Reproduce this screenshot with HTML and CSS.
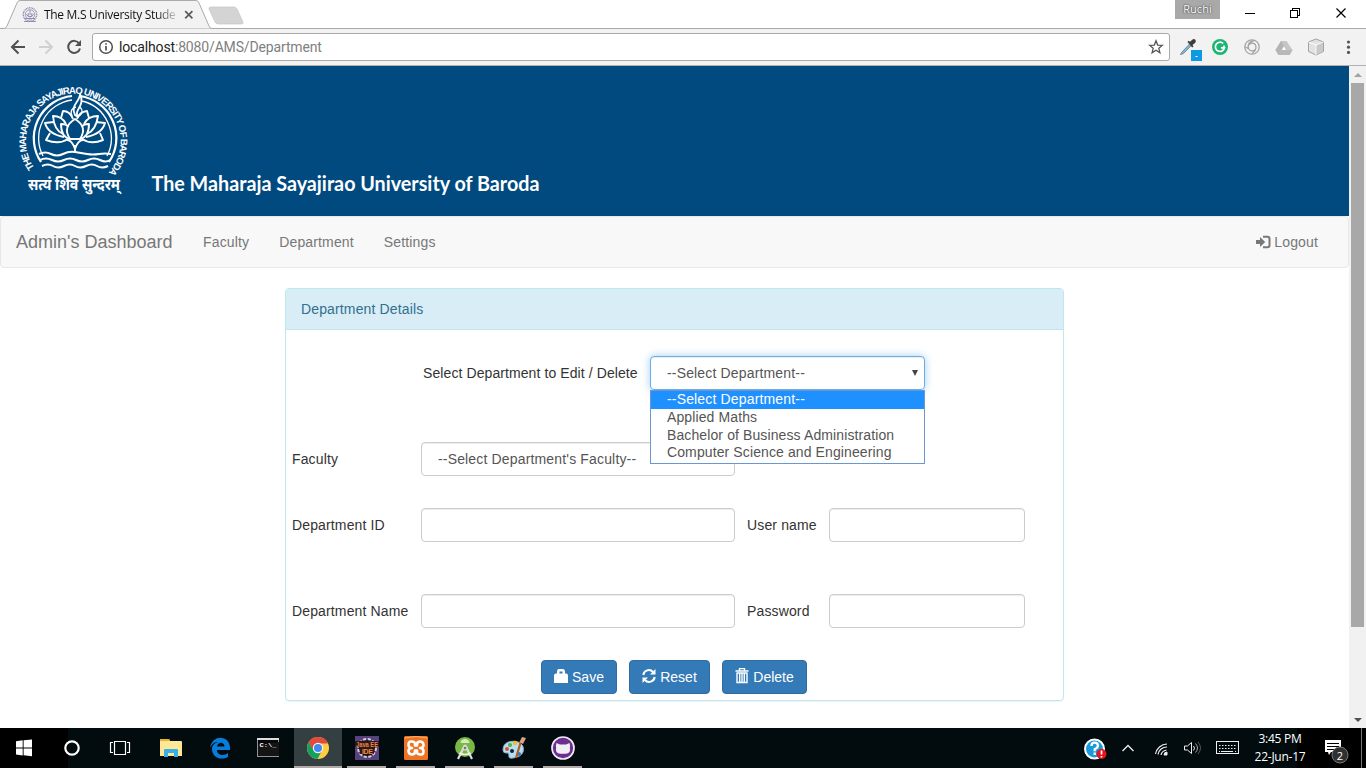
FILE: index.html
```html
<!DOCTYPE html>
<html lang="en">
<head>
<meta charset="utf-8">
<title>The M.S University Student</title>
<link rel="stylesheet" href="styles.css">
</head>
<body>
<div class="screen">
  <header class="tabstrip">
    <svg class="tab-shape" width="250" height="29" viewBox="0 0 250 29">
      <path d="M0 28.5H4Q6 28 7 26L17 3Q18 .5 20 .5H196Q198 .5 199 3L209 26Q210 28.5 212 28.5H250V29H0Z" fill="#f2f2f2" stroke="#aaa"/>
      <path d="M211 7H234Q236 7 237 9L243 22Q243.500 24 241 24H219Q216 24 215 22L209 9Q208.500 7 211 7Z" fill="#d4d4d4" stroke="#c4c4c4" stroke-width=".7"/>
    </svg>
    <div class="tab-content">
      <svg class="favicon" width="16" height="16" viewBox="0 0 16 16" fill="none" stroke="#8988ad">
        <circle cx="8" cy="7.500" r="6.700" stroke-dasharray="1 .6" stroke-width="1.400"/><circle cx="8" cy="7.500" r="4.700" stroke-width=".8"/><path d="M4.500 7q1 3 3.500 3t3.500-3M6 6q0 3 2 4 2-1 2-4M8 3v5M3 11.500h10M2 14.500h12" stroke-width=".9"/>
      </svg>
      <span class="tab-title">The M.S University Stude</span>
      <svg class="tab-close" width="10" height="10" viewBox="0 0 10 10"><path d="M1.200 1.200l7.200 7.200M8.400 1.200L1.200 8.400" stroke="#5a5a5a" stroke-width="1.700"/></svg>
    </div>
    <div class="window-controls">
      <span class="profile">Ruchi</span>
      <svg width="146" height="28" viewBox="0 0 146 28" fill="none" stroke="#000" shape-rendering="crispEdges">
        <path d="M25 13.500h10M70.500 10.500h7v7h-7zM72.500 10V8.500h7v7H78"/>
        <path d="M116.500 8.500l9 9M125.500 8.500l-9 9" shape-rendering="auto" stroke-width="1.200"/>
      </svg>
    </div>
  </header>

  <div class="toolbar">
    <svg class="nav-icons" width="92" height="36" viewBox="0 0 92 36" fill="none" stroke="#505050" stroke-width="2">
      <path d="M25 18H12.500M18.500 11.500L12 18l6.500 6.500"/>
      <path d="M39 18h12.500M45.500 11.500L52 18l-6.500 6.500" stroke="#d0d0d0"/>
      <path d="M79.200 14.500A6 6 0 1 0 80 19.500"/><path d="M81 11v6h-6z" fill="#505050" stroke="none"/>
    </svg>
    <div class="omnibox">
      <svg width="16" height="16" viewBox="0 0 16 16" fill="none" stroke="#505050" stroke-width="1.500"><circle cx="8" cy="8" r="6.300"/><path d="M8 7v4.500M8 4.200v1.600" stroke-width="1.700"/></svg>
      <span class="url">localhost<span class="path">:8080/AMS/Department</span></span>
      <svg width="16" height="16" viewBox="0 0 16 16" fill="none" stroke="#555" stroke-width="1.300"><path d="M8 1.800l1.700 4.300 4.600.3-3.500 2.900 1.100 4.500L8 11.300l-3.900 2.500 1.100-4.500-3.500-2.900 4.600-.3z"/></svg>
    </div>
    <svg class="extensions" width="196" height="36" viewBox="0 0 196 36">
      <g><path d="M11.500 23.500l8.500-9 1.700 1.700-8.500 8.500-2.700.8z" fill="#71bbe0" stroke="#777" stroke-width=".8"/><path d="M17.500 13l1-1.200 1.500 1 2.500-2.300q2-1 3 .5t-.5 3L22.500 16l1 1.500-1.300 1z" fill="#3d3d40"/><rect x="21" y="21" width="11" height="11" fill="#0c9ae2"/><path d="M25.500 27.500h2" stroke="#fff"/></g>
      <circle cx="50" cy="18" r="8" fill="#1cb574"/><path d="M53.200 14.500A4.600 4.600 0 1 0 54.500 18.800H51M54 16.500v3" fill="none" stroke="#fff" stroke-width="1.700"/>
      <g fill="none" stroke="#a5a5a5" stroke-width="1.300"><circle cx="82" cy="18" r="7.200"/><path d="M84.800 20.800A3.900 3.900 0 1 1 86 17.500q0 4.500-4 7M79 20q-1.500-1-4-2M78 18q0-5 6-6.500"/></g>
      <path d="M111 12h5.500l6 9-3 5h-11l-3-5z" fill="#c6c6c6"/><path d="M111 12l2.800 4.500-5.300 9.500-3-5z" fill="#b4b4b4"/><path d="M112 21l1.800-3.500 2.200 3.500z" fill="#fff"/><path d="M112 21h10.500l-3 5h-11z" fill="#b8b8b8"/>
      <path d="M146 10l7.500 3v9.500L146 26l-7.500-3.500V13z" fill="#e2e2e2" stroke="#a2a2a2"/><path d="M138.500 13l7.500 3 7.500-3M146 16v10" fill="none" stroke="#fff"/><path d="M146.500 16.500l6.500-3v9l-6.500 3z" fill="#c9c9c9"/>
      <g fill="#555"><circle cx="178.500" cy="13" r="1.600"/><circle cx="178.500" cy="18.200" r="1.600"/><circle cx="178.500" cy="23.400" r="1.600"/></g>
    </svg>
  </div>

  <div class="viewport">
    <main class="page">
      <div class="banner">
        <svg width="600" height="150" viewBox="0 0 600 150">
          <defs><path id="ring" d="M34.500 102A47.300 47.300 0 1 1 105 110"/></defs>
          <text class="ring-text"><textPath href="#ring" textLength="212" lengthAdjust="spacing">THE MAHARAJA SAYAJIRAO UNIVERSITY OF BARODA</textPath></text>
          <g fill="none" stroke="#fff" stroke-linejoin="round">
            <path d="M41 96A42.500 42.500 0 0 1 72 30M80 30A42.500 42.500 0 0 1 109 96" stroke-width="2.200"/>
            <path d="M43 90A38.500 38.500 0 0 1 72 34M82 35A38.500 38.500 0 0 1 107 90" stroke-width="1.300"/>
            <path d="M80 28C80 36 70 39 75 49L78 51C73 44 86 40 80 28Z" stroke-width="1.800"/>
            <path d="M72 50Q69 43 76 41M78 51Q85 46 80 41" stroke-width="1.400"/>
            <g stroke-width="1.900">
              <path d="M75 53Q62 61 70 73H80Q88 61 75 53Z"/>
              <path d="M70 73Q61 71 61 58Q67 58 68 61M80 73Q89 71 89 58Q83 58 82 61"/>
              <path d="M63 68Q54 64 53 50Q62 50 66 58M87 68Q96 64 98 50Q88 50 84 58"/>
              <path d="M61 52L63 45Q70 45 73 53M77 53Q79 46 87 45L89 52"/>
              <path d="M54 56L45 57Q48 68 64 71M96 56L105 57Q102 68 86 71"/>
              <path d="M50 67L46 74Q59 79 68 73M100 67L103 74Q91 79 82 73"/>
              <path d="M67 74Q72 74 75 83Q78 74 83 74M75 79V86"/>
            </g>
            <g stroke-width="2">
              <path d="M39 88q6-3 12 0t12 0 12-2 12 2 12 0 12 0"/>
              <path d="M40 94q6-3 12 0t12 0 12 0 12 0 12 0 10 0"/>
              <path d="M42 100q6-3 11 0t11 0 11 0 11 0 11 0 11 0"/>
            </g>
          </g>
          <text class="motto" x="28" y="124" textLength="92" lengthAdjust="spacingAndGlyphs">सत्यं शिवं सुन्दरम्</text>
          <text class="uni-name" x="151.500" y="125" textLength="388" lengthAdjust="spacingAndGlyphs">The Maharaja Sayajirao University of Baroda</text>
        </svg>
      </div>

      <nav class="navbar">
        <span class="brand">Admin's Dashboard</span>
        <span class="nav-link">Faculty</span>
        <span class="nav-link">Department</span>
        <span class="nav-link">Settings</span>
        <span class="logout"><svg width="15" height="14" viewBox="0 0 15 14"><path d="M0 5h4V2L9.200 7 4 12V9H0z" fill="#777"/><path d="M7 1.800h4.500q2 0 2 2v6.400q0 2-2 2H7" fill="none" stroke="#777" stroke-width="2"/></svg>Logout</span>
      </nav>

      <section class="panel">
        <h1 class="panel-heading">Department Details</h1>
        <form class="panel-body">
          <div class="picker">
            <label>Select Department to Edit / Delete</label>
            <div class="control select focused">--Select Department--<span class="arrow"></span>
              <ul class="options">
                <li class="selected">--Select Department--</li>
                <li>Applied Maths</li>
                <li>Bachelor of Business Administration</li>
                <li>Computer Science and Engineering</li>
              </ul>
            </div>
          </div>
          <div class="row faculty-row">
            <label>Faculty</label><div class="control select">--Select Department's Faculty--</div>
          </div>
          <div class="row id-row">
            <label>Department ID</label><div class="control"></div>
            <label class="second">User name</label><div class="control"></div>
          </div>
          <div class="row">
            <label>Department Name</label><div class="control"></div>
            <label class="second">Password</label><div class="control"></div>
          </div>
          <div class="buttons">
            <div class="btn save"><svg width="14" height="14" viewBox="0 0 14 14"><path d="M0 14V6.500Q0 4.500 2 4.500H3V3Q3 0 5 0h3.500Q11 0 11 3v1.500h1Q14 4.500 14 6.500V14zM5.500 4.500h3V2.500h-3z" fill="#fff"/></svg>Save</div>
            <div class="btn reset"><svg width="14" height="14" viewBox="0 0 14 14"><path d="M1.300 6A5.600 5.600 0 0 1 11 3M12.700 8A5.600 5.600 0 0 1 3 11" fill="none" stroke="#fff" stroke-width="2"/><path d="M13.500 0v5.500H8zM.5 14V8.500H6z" fill="#fff"/></svg>Reset</div>
            <div class="btn delete"><svg width="14" height="16" viewBox="0 0 14 16" fill="none" stroke="#fff"><path d="M4.500 2.500v-2h5v2M.5 3h13" stroke-width="1.400"/><path d="M2 5v9.500h10V5M4.700 5v9M7 5v9M9.300 5v9M1.500 5h11" stroke-width="1.400"/></svg>Delete</div>
          </div>
        </form>
      </section>
    </main>
    <div class="scrollbar"><span class="up"></span><span class="thumb"></span><span class="down"></span></div>
  </div>

  <footer class="taskbar">
    <div class="apps">
      <svg width="294" height="40" viewBox="0 0 294 40">
        <path d="M0 0h68v40H0z" fill="#000"/>
        <path d="M16 13.300l6.700-1v7.200H16zM23.600 12.200L32 11.500v8h-8.400zM16 20.400h6.700v7l-6.700-.9zM23.600 20.400H32v7.800l-8.400-1z" fill="#fff"/>
        <circle cx="72" cy="20" r="6.700" fill="none" stroke="#fff" stroke-width="2.200"/>
        <path d="M114.500 13.500h11v13h-11zM113 14.500h-2.500v10H113M127 14.500h2.500v10H127" fill="none" stroke="#fff" stroke-width="1.200"/>
        <path d="M160 28V12q0-1 1-1h8l1 2h11q1 0 1 1v14z" fill="#ffe795"/><path d="M160 13V12q0-1 1-1h8l1 2z" fill="#e8b531"/><path d="M164 29v-7q0-1 1-1h12q1 0 1 1v7h-4v-4h-6v4z" fill="#36b0e6"/>
        <path d="M210 20C212 6 230 7 230 20v2h-13c0 6 8 6 11 3v4c-8 4-16 0-16-8 0-4 3-6 6-7-4 0-6 2-8 6zm7-1.500h7.500C224 13.500 218 13.500 217 18.500z" fill="#087cd9"/>
        <rect x="257.500" y="10.500" width="21" height="18" fill="#080808" stroke="#939393"/><path d="M257 11h22" stroke="#ddd" stroke-width="2"/><path d="M258 28V17l21-3v14z" fill="#151515"/><text class="console" x="259.500" y="19" textLength="17" lengthAdjust="spacingAndGlyphs">C:\_</text>
      </svg>
      <div class="app active"><svg width="24" height="24" viewBox="0 0 24 24"><circle cx="12" cy="12" r="11" fill="#ffcd42"/><path d="M2.500 6.500A11 11 0 0 1 22 7.500H12L7.500 15z" fill="#e04a3f"/><path d="M2.500 6.500A11 11 0 0 0 11.500 23L16 14.500 8 15z" fill="#14a160"/><circle cx="12" cy="12" r="5.200" fill="#f5f5f5"/><circle cx="12" cy="12" r="4" fill="#4688f1"/></svg></div>
      <div class="app"><svg width="24" height="24" viewBox="0 0 24 24"><rect width="24" height="24" fill="#59417e"/><circle cx="12" cy="12" r="8.500" fill="#191116" stroke="#d2cfd3" stroke-width="3" stroke-dasharray="3 1.500"/><circle cx="12" cy="12" r="8" fill="#191116"/><path d="M0 5h24v6H0zM5 11h14v7H5z" fill="#2c1820"/><text class="ide" x="1" y="11" textLength="22" lengthAdjust="spacingAndGlyphs">Java EE</text><text class="ide" x="7" y="17.500" textLength="11">IDE</text></svg></div>
      <div class="app"><svg width="24" height="24" viewBox="0 0 24 24"><rect width="24" height="24" rx="1.500" fill="#ee7423"/><path d="M.5 2Q12-1 23.500 2" fill="none" stroke="#ffb16e"/><path d="M8 12Q4.500 12 4.500 8.500T8 5.500 11 8.500v1h2v-1q0-3 3-3t3.500 3T16 12q3.500 0 3.500 3.500t-3.500 3-3-3v-1h-2v1q0 3-3 3t-3.500-3T8 12z" fill="none" stroke="#fff" stroke-width="2.600" stroke-linejoin="round"/></svg></div>
      <div class="app"><svg width="24" height="24" viewBox="0 0 24 24"><circle cx="12" cy="11" r="10" fill="#79b843"/><path d="M7.500 7a4.500 4 0 0 1 9 0z" fill="#d3eaba"/><path d="M12 9L5 23M12 9l7 14" stroke="#ddd" stroke-width="2.200"/><path d="M6.500 17q5.500 3 11 0" stroke="#f3f3f3" stroke-width="1.700" fill="none"/><circle cx="12" cy="12" r="2" fill="#777" stroke="#eee"/></svg></div>
      <div class="app"><svg width="24" height="24" viewBox="0 0 24 24"><path d="M1 14C1 6 9 4 16 6q7 3 5 10-2 5-10 6-5 1-4-3 0-3-3-2-3 0-3-3z" fill="#b7dff4" stroke="#82b2cf"/><circle cx="5" cy="13" r="2" fill="#dc4d37"/><circle cx="8" cy="9" r="2" fill="#58af43"/><circle cx="13" cy="7" r="2.300" fill="#f2ba37"/><circle cx="10" cy="15" r="2" fill="#14232e"/><circle cx="17" cy="18" r="2" fill="#347acc"/><path d="M14 22L19 5" stroke="#b75d21" stroke-width="2.200"/><path d="M17.500 6L20 1l4 1-3 6z" fill="#d8a681"/></svg></div>
      <div class="app"><svg width="24" height="24" viewBox="0 0 24 24"><circle cx="12" cy="12" r="11" fill="#6d2e92" stroke="#f0eaf3" stroke-width="1.700"/><path d="M5.500 7l3.500 1.500h6L18.500 7q1 3 .3 4.500 1.500 6-4.300 6.300h-5Q3.700 17.500 5.200 11.500 4.500 10 5.500 7z" fill="#f2eff4"/></svg></div>
    </div>
    <div class="tray">
      <svg width="164" height="40" viewBox="0 0 164 40" fill="none" stroke="#eee">
        <circle cx="12.500" cy="21" r="9.500" fill="#199bda" stroke="#fff" stroke-width="2"/><path d="M9.500 18q0-3.300 3.200-3.300t3.200 3q0 2-3.200 3.500v2M12.700 24.500V27" stroke="#fff" stroke-width="2.300"/><circle cx="19.500" cy="26" r="5" fill="#e9131c" stroke="none"/><path d="M19.500 22.500v4M19.500 28v1.500" stroke="#fff" stroke-width="1.700"/>
        <path d="M40.500 23l5.500-5.500 5.500 5.500" stroke-width="1.300"/>
        <path d="M73.500 26A12 12 0 0 1 85 16M76 26.500a9 9 0 0 1 9-7.500M79 27q.7-4 5.500-5" stroke-width="1.200"/><path d="M82 27q0-3 3-3v3z" fill="#eee"/>
        <path d="M102.500 18h3l4-3.500v11l-4-3.500h-3z"/><path d="M111.500 18q2 2 0 4.500"/><path d="M113.500 15.500q4 4.500 0 9" stroke="#aaa"/><path d="M116 14q5 6 0 12" stroke="#555"/>
        <rect x="134.500" y="13.500" width="22" height="12"/><path d="M137 17.500h17M137 20.500h17" stroke-dasharray="1.500 1.500"/><path d="M139 23.500h12M137 23.500h1M153 23.500h1"/>
      </svg>
      <div class="clock"><span class="time">3:45 PM</span><span class="date">22-Jun-17</span></div>
      <svg class="notify" width="69" height="40" viewBox="0 0 69 40"><path d="M0 0h69v40H0z" fill="#000"/><path d="M28 12h16v12H34l-2 3-1-3h-3z" fill="#fff"/><path d="M30 15.500h12M30 18.500h12M30 21.500h7" stroke="#000"/><circle cx="43" cy="27" r="8" fill="#303030" stroke="#777"/><text class="badge" x="39.700" y="31.500">2</text><path d="M64.500 0v40" stroke="#777"/></svg>
    </div>
  </footer>
</div>
</body>
</html>
```
FILE: styles.css
```css
* { box-sizing: border-box; }
body { margin: 0; font: 14px/20px "Liberation Sans", Arial, sans-serif; color: #333; }
svg { display: block; flex: none; }
.screen { width: 1366px; height: 768px; display: flex; flex-direction: column; overflow: hidden; background: #fff; }

.tabstrip { height: 29px; flex: none; display: flex; justify-content: space-between; position: relative; border-bottom: 1px solid #aaa; }
.tab-shape { position: absolute; left: 0; top: 0; }
.tab-content { position: relative; display: flex; align-items: center; padding: 2px 0 0 22px; width: 210px; }
.tab-title { margin-left: 6px; width: 134px; font: 12px/18px "Open Sans", sans-serif; letter-spacing: -.3px; white-space: nowrap; overflow: hidden; background: linear-gradient(90deg, #111 112px, #ccc 132px); -webkit-background-clip: text; background-clip: text; color: transparent; }
.tab-close { margin-left: 6px; }
.window-controls { display: flex; align-items: flex-start; }
.profile { width: 45px; height: 19px; background: #a9a9a9; color: #fff; text-align: center; font: 11px/18px "Open Sans", sans-serif; text-shadow: 0 0 2px #333, 0 0 1px #555; }

.toolbar { height: 37px; flex: none; display: flex; align-items: flex-start; background: #f2f2f2; border-bottom: 1px solid #b2b0b2; }
.omnibox { width: 1078px; height: 28px; margin-top: 4px; padding: 0 5px; border: 1px solid #a9a9a9; border-radius: 3px; background: #fff; display: flex; align-items: center; }
.url { flex: 1; margin-left: 5px; font: 14px/20px Roboto, sans-serif; letter-spacing: -.15px; color: #222; }
.path { color: #808080; }

.viewport { height: 662px; flex: none; display: flex; }
.page { width: 1349px; background: #fff; }
.banner { height: 150px; background: #004a80; }
.ring-text { font: bold 9.600px "Liberation Sans Narrow", "Liberation Sans", sans-serif; fill: #fff; }
.motto { font: bold 16px "Noto Sans Devanagari", "Lohit Devanagari", "Noto Sans", sans-serif; fill: #fff; }
.uni-name { font: bold 20.500px Lato, sans-serif; fill: #fff; }

.navbar { height: 52px; display: flex; align-items: center; padding: 0 30px 0 15px; background: #f8f8f8; border: 1px solid #e7e7e7; border-radius: 4px; color: #777; }
.brand { font-size: 18px; margin-right: 15.500px; }
.nav-link { padding: 0 15px; letter-spacing: .15px; }
.logout { margin-left: auto; display: flex; align-items: center; gap: 3px; letter-spacing: .15px; }

.panel { width: 779px; height: 413px; margin: 20px 0 0 285px; border: 1px solid #bce8f1; border-radius: 4px; box-shadow: 0 1px 1px rgba(0, 0, 0, .05); letter-spacing: .14px; }
.panel-heading { margin: 0; height: 41px; padding: 10px 15px; font-size: 14px; line-height: 20px; font-weight: normal; color: #31708f; background: #d9edf7; border-bottom: 1px solid #bce8f1; border-radius: 3px 3px 0 0; }
.panel-body { padding: 26px 6px 0; }
.control { position: relative; height: 34px; border: 1px solid #ccc; border-radius: 4px; background: #fff; color: #555; line-height: 32px; box-shadow: inset 0 1px 1px rgba(0, 0, 0, .075); }
.select { padding-left: 16px; letter-spacing: .16px; }
.focused { width: 275px; border-color: #66afe9; box-shadow: inset 0 1px 1px rgba(0, 0, 0, .075), 0 0 8px rgba(102, 175, 233, .6); }
.arrow { position: absolute; right: 6px; top: 13px; border: solid transparent; border-width: 6px 3.500px 0; border-top-color: #444; }
.options { position: absolute; z-index: 2; left: -1px; top: 33px; width: 275px; height: 74px; margin: 0; padding: 0; list-style: none; background: #fff; border: 1px solid #6c96d2; line-height: 17.700px; letter-spacing: .11px; }
.options li { padding-left: 16px; height: 17.700px; }
.options .selected { height: 18px; background: #1e90ff; color: #fff; letter-spacing: .16px; }
.picker { display: grid; grid-template-columns: 227px 275px; align-items: center; padding-left: 131px; letter-spacing: .09px; }
.row { display: grid; grid-template-columns: 129px 314px 94px 196px; align-items: center; }
.second { padding-left: 12px; }
.faculty-row { margin-top: 52px; }
.id-row { margin: 32px 0 52px; }
.buttons { display: flex; gap: 12px; margin: 32px 0 0 249px; letter-spacing: 0; }
.btn { height: 34px; display: flex; align-items: center; justify-content: center; gap: 4px; background: #337ab7; border: 1px solid #2e6da4; border-radius: 4px; color: #fff; }
.btn svg { margin-top: -2px; }
.save { width: 76px; }
.reset { width: 81px; }
.delete { width: 85px; }

.scrollbar { width: 17px; background: #f1f1f1; padding: 7px 2px 6px; display: flex; flex-direction: column; align-items: center; }
.up { border: solid transparent; border-width: 0 4px 4px; border-bottom-color: #a3a3a3; }
.thumb { width: 13px; height: 544px; margin-top: 6px; background: #a8a8a8; }
.down { margin-top: auto; border: solid transparent; border-width: 4px 4px 0; border-top-color: #505050; }

.taskbar { height: 40px; flex: none; display: flex; justify-content: space-between; background: #020b0e; color: #fff; }
.apps { display: flex; }
.app { width: 39px; height: 40px; margin-left: 10px; padding-top: 8px; display: flex; justify-content: center; align-items: flex-start; border-bottom: 2px solid #b1aaa6; }
.app.active { width: 48px; margin-left: 0; background: #343f42; }
.app.active + .app { margin-left: 5px; }
.console { font: bold 6px "Liberation Mono", monospace; fill: #fff; }
.ide { font: bold 7px "Liberation Sans", sans-serif; fill: #ee873a; }
.tray { display: flex; }
.clock { position: relative; z-index: 1; width: 65px; margin-right: -16px; padding: 2px 1px 0 0; display: flex; flex-direction: column; align-items: center; font: 12px/18px "Open Sans", sans-serif; letter-spacing: -.25px; white-space: nowrap; }
.tray > svg:first-child { margin-right: 2px; }
.badge { font: 11px "Open Sans", sans-serif; fill: #fff; }
```
